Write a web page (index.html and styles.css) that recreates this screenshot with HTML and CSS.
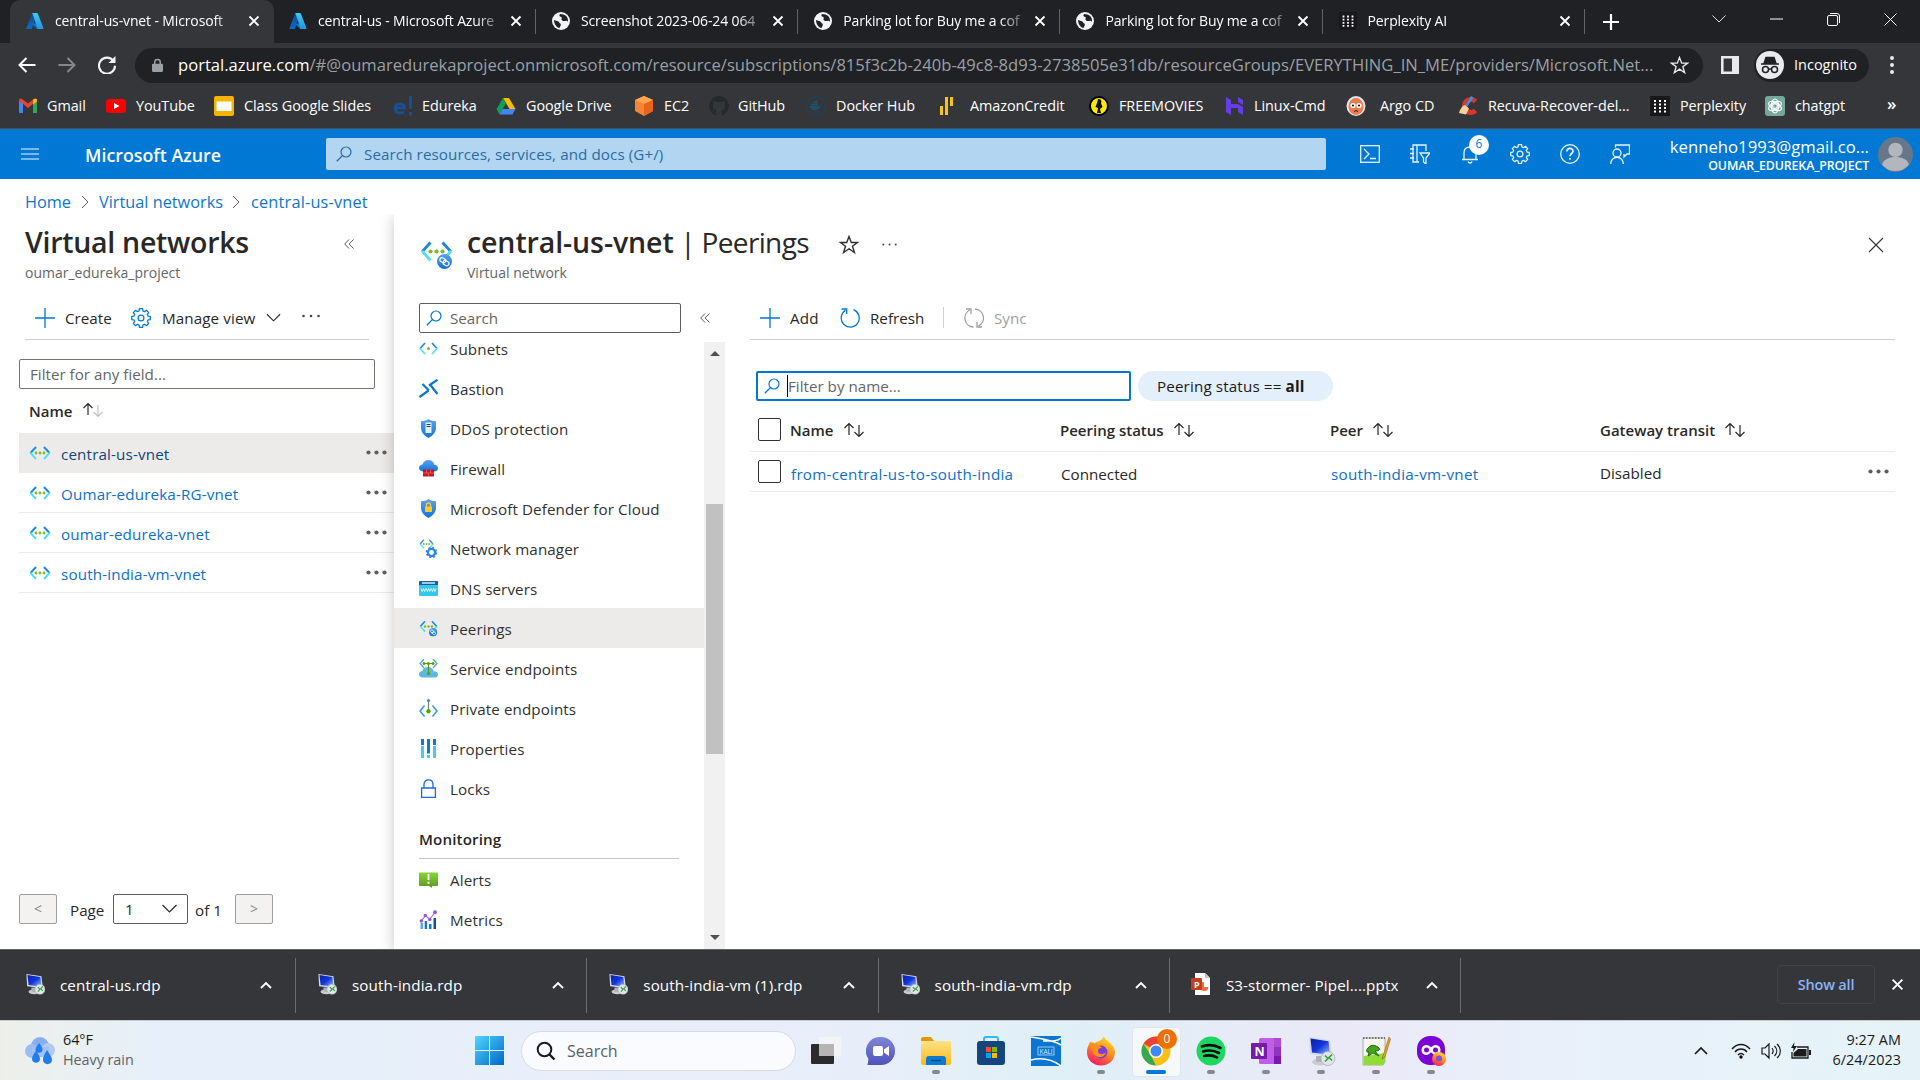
FILE: index.html
```html
<!DOCTYPE html>
<html lang="en">
<head>
<meta charset="utf-8">
<title>central-us-vnet - Microsoft Azure</title>
<link rel="stylesheet" href="styles.css">
</head>
<body>
<svg class="defs" aria-hidden="true">
  <defs>
    <linearGradient id="az1" x1="0" y1="0" x2="0" y2="1"><stop offset="0" stop-color="#114a8b"/><stop offset="1" stop-color="#0a6bc4"/></linearGradient>
    <linearGradient id="az2" x1="0" y1="0" x2="0" y2="1"><stop offset="0" stop-color="#3ccbf4"/><stop offset="1" stop-color="#2892df"/></linearGradient>
    <linearGradient id="shieldG" x1="0" y1="0" x2="0" y2="1"><stop offset="0" stop-color="#5ea0ef"/><stop offset="1" stop-color="#0f74d6"/></linearGradient>
    <linearGradient id="winG" x1="0" y1="0" x2="1" y2="1"><stop offset="0" stop-color="#4fd6ff"/><stop offset="1" stop-color="#0067c5"/></linearGradient>
    <linearGradient id="screenG" x1="0" y1="0" x2="1" y2="1"><stop offset="0" stop-color="#0a1fae"/><stop offset=".5" stop-color="#1236d8"/><stop offset="1" stop-color="#9cc0ff"/></linearGradient>
    <linearGradient id="foldG" x1="0" y1="0" x2="0" y2="1"><stop offset="0" stop-color="#ffe28a"/><stop offset="1" stop-color="#fbb917"/></linearGradient>
    <linearGradient id="foxG" x1=".8" y1="0" x2=".3" y2="1"><stop offset="0" stop-color="#ffe226"/><stop offset=".5" stop-color="#ff8a1d"/><stop offset="1" stop-color="#f5156c"/></linearGradient>
    <linearGradient id="chatG" x1="0" y1="0" x2="0" y2="1"><stop offset="0" stop-color="#8185d6"/><stop offset="1" stop-color="#4f52bd"/></linearGradient>
    <linearGradient id="alertG" x1="0" y1="0" x2="0" y2="1"><stop offset="0" stop-color="#86d633"/><stop offset="1" stop-color="#5e9624"/></linearGradient>
    <symbol id="azure" viewBox="0 0 18 18"><path d="M6.200 1h5L6 16.400a.9.9 0 0 1-.8.600H1.300a.8.800 0 0 1-.8-1.100z" fill="url(#az1)"/><path d="M13 11.500H5.500l4.800 4.600.9.900h4.200z" fill="#0078d4"/><path d="M11.800 1.600a.9.9 0 0 0-.8-.6H6.300l5 15c.1.500-.1 1-.6 1h5.900a.8.8 0 0 0 .8-1.100z" fill="url(#az2)"/></symbol>
    <symbol id="globe" viewBox="0 0 18 18"><circle cx="9" cy="9" r="9" fill="#f1f3f4"/><path d="M2 8c2 1 4 .6 5 2.300s2 1 1.800 2.600-1.300 2.200-1.300 3.200C4.500 15.500 2 12 2 8zM8 2c-1 1.500-.7 2.600.8 2.800 1.500.3 1 1.600.6 2.400s2 2.300 4.200 1.700c1.300-.3 2 .4 2.400 1C16.600 5 13.200 2 8 2z" fill="#202124"/></symbol>
    <symbol id="x" viewBox="0 0 12 12"><path d="M1.500 1.500l9 9m0-9l-9 9" fill="none" stroke="currentColor" stroke-width="1.800"/></symbol>
    <symbol id="bigx" viewBox="0 0 16 16"><path d="M1 1l14 14m0-14L1 15" fill="none" stroke="currentColor" stroke-width="1.100"/></symbol>
    <symbol id="dots9" viewBox="0 0 20 20"><rect width="20" height="20" fill="#18181b"/><path d="M4 5h12M4 8.500h12M4 12h12M4 15.500h12" stroke="#fff" stroke-width="2" stroke-dasharray="2 3"/></symbol>
    <symbol id="mag" viewBox="0 0 16 16"><circle cx="10" cy="6" r="5" fill="none" stroke="currentColor" stroke-width="1.200"/><path d="M6.400 9.600L.8 15.200" stroke="currentColor" stroke-width="1.300"/></symbol>
    <symbol id="gear" viewBox="0 0 20 20"><path d="M8.110 2.950L8.370.740h3.260l.26 2.210 1.760.73 1.740-1.380 2.310 2.310-1.380 1.740.73 1.760 2.210.26v3.260l-2.210.26-.73 1.760 1.380 1.740-2.310 2.310-1.740-1.380-1.760.73-.26 2.210H8.370l-.26-2.210-1.760-.73-1.740 1.380L2.300 15.390l1.380-1.740-.73-1.760-2.210-.26V8.370l2.210-.26.73-1.760L2.300 4.610 4.610 2.300l1.740 1.380z" fill="none" stroke="currentColor" stroke-width="1.250" stroke-linejoin="round"/><circle cx="10" cy="10" r="2.900" fill="none" stroke="currentColor" stroke-width="1.250"/></symbol>
    <symbol id="plus" viewBox="0 0 20 20"><path d="M10 0v20M0 10h20" stroke="#0078d4" stroke-width="1.300"/></symbol>
    <symbol id="chev" viewBox="0 0 16 10"><path d="M1 1l7 7 7-7" fill="none" stroke="currentColor" stroke-width="1.200"/></symbol>
    <symbol id="up" viewBox="0 0 12 8"><path d="M1 7l5-5 5 5" fill="none" stroke="currentColor" stroke-width="1.900"/></symbol>
    <symbol id="crumb" viewBox="0 0 8 14"><path d="M1 1l6 6-6 6" fill="none" stroke="#605e5c" stroke-width="1"/></symbol>
    <symbol id="collapse" viewBox="0 0 10 10"><path d="M5 .5L.7 5 5 9.500M9.500.5L5.200 5l4.300 4.500" fill="none" stroke="#605e5c" stroke-width="1"/></symbol>
    <symbol id="ell" viewBox="0 0 22 5"><circle cx="2.500" cy="2.500" r="2.100"/><circle cx="10.500" cy="2.500" r="2.100"/><circle cx="18.500" cy="2.500" r="2.100"/></symbol>
    <symbol id="sort" viewBox="0 0 22 16"><path d="M6 13V1.500M1.500 6L6 1.500 10.500 6" fill="none" stroke="currentColor" stroke-width="1.200"/><path d="M16 3v11.500M11.500 10l4.500 4.500 4.500-4.500" fill="none" stroke="var(--dn, currentColor)" stroke-width="1.200"/></symbol>
    <symbol id="vnet" viewBox="0 0 22 14"><path d="M7 1L1.500 7" stroke="#1b87da" stroke-width="1.900" fill="none"/><path d="M15 1l5.500 6" stroke="#1b87da" stroke-width="1.900" fill="none"/><path d="M1.300 6.700L7 13M20.700 6.700L15 13" stroke="#50dff5" stroke-width="1.900" fill="none"/><circle cx="7" cy="7" r="1.400" fill="#76bc2d"/><circle cx="11" cy="7" r="1.400" fill="#76bc2d"/><circle cx="15" cy="7" r="1.400" fill="#76bc2d"/></symbol>
    <symbol id="subnet" viewBox="0 0 19 19"><path d="M6 4L1 9.500M13 4l5 5.500" stroke="#1b87da" stroke-width="1.600"/><path d="M.8 9.200L6 15M18.200 9.200L13 15" stroke="#50dff5" stroke-width="1.600"/><circle cx="9.500" cy="9.500" r="1.500" fill="#76bc2d"/></symbol>
    <symbol id="link" viewBox="0 0 16 16"><circle cx="8" cy="8" r="8" fill="url(#shieldG)"/><g fill="none" stroke="#fff" stroke-width="1.300" transform="rotate(30 8 8)"><rect x="2.500" y="5.500" width="6.500" height="4.500" rx="2.200"/><rect x="7" y="6.500" width="6.500" height="4.500" rx="2.200"/></g></symbol>
    <symbol id="peer" viewBox="0 0 33 28"><use href="#vnet" width="33" height="21"/><use href="#link" x="17" y="13" width="15" height="15"/></symbol>
    <symbol id="bastion" viewBox="0 0 19 19"><path d="M18.500.8L10 6.500M.5 18L9.500 11.500M3.500 5l6.500 6.600M11 5.500l7.500 9.500" stroke="#0a76cf" stroke-width="2.200" fill="none"/></symbol>
    <symbol id="shield" viewBox="0 0 19 19"><path d="M9.500 0C7 2 4.500 2 2 2.200V9c0 5 4.500 8.500 7.500 10 3-1.500 7.500-5 7.500-10V2.200C14.500 2 12 2 9.500 0z" fill="url(#shieldG)"/></symbol>
    <symbol id="fire" viewBox="0 0 19 19"><path d="M4.500 12.500C2 12.500 0 11 0 8.900c0-2 1.500-3.300 3.500-3.500C4.300 2.600 6.500 1 9.500 1s5.200 2 5.800 4.700c2.200.2 3.700 1.600 3.700 3.500 0 2-1.700 3.300-4 3.300z" fill="url(#shieldG)"/><path d="M4 10.500h11v7H4z" fill="#c4161c"/><path d="M4 14h11M7.500 10.500V14M11.500 10.500V14M9.500 14v3.500" stroke="#f08080" stroke-width=".6"/></symbol>
    <symbol id="nm" viewBox="0 0 19 19"><use href="#vnet" x="0" y="0" width="15" height="10"/><circle cx="12.500" cy="13.500" r="3.600" fill="none" stroke="#2f86dc" stroke-width="2.300"/><circle cx="12.500" cy="13.500" r="5" fill="none" stroke="#2f86dc" stroke-width="1.500" stroke-dasharray="2 1.930"/></symbol>
    <symbol id="dns" viewBox="0 0 19 19"><rect x="0" y="2" width="19" height="15" rx="1" fill="#34c8ea"/><path d="M0 6V3a1 1 0 0 1 1-1h17a1 1 0 0 1 1 1v3z" fill="#1160a8"/><path d="M3 4h13" stroke="#fff" stroke-width="1.300"/><path d="M2 9.500l1.200 3 1.200-3 1.200 3 1.200-3M7.200 9.500l1.200 3 1.200-3 1.200 3 1.200-3M12.300 9.500l1.200 3 1.200-3 1.200 3 1.200-3" stroke="#fff" stroke-width=".8" fill="none"/></symbol>
    <symbol id="sep" viewBox="0 0 19 19"><path d="M3.500 18.500C1.500 18.500 0 17 0 15.200s1.500-3 3.200-3.100C4 9.500 6 8 9 8s5 1.700 5.600 4.300c2.500 0 4.400 1 4.400 3.100s-1.500 3.100-3.500 3.100z" fill="#5ab9dd"/><path d="M5 0L1 4.500 5 9M14 0l4 4.500L14 9" stroke="#4aa9d4" stroke-width="1.300" fill="none"/><path d="M4.500 4.500h10M9.500 4.500V15" stroke="#5c9d10" stroke-width="1"/><g fill="#57a300"><circle cx="5" cy="4.500" r="1.500"/><circle cx="9.500" cy="4.500" r="1.500"/><circle cx="14" cy="4.500" r="1.500"/><circle cx="9.500" cy="14.500" r="1.600"/></g></symbol>
    <symbol id="pep" viewBox="0 0 19 19"><path d="M5.500 6.500L1 12l4.500 5.500M13.500 6.500L18 12l-4.500 5.500" stroke="#3d9fd0" stroke-width="1.600" fill="none"/><path d="M9.500 2v10" stroke="#7a7f85" stroke-width="1.200"/><circle cx="9.500" cy="1.600" r="1.600" fill="#3595c9"/><circle cx="9.500" cy="12.300" r="2.200" fill="#57a300"/></symbol>
    <symbol id="props" viewBox="0 0 19 19"><path d="M2 0h3v6H2zM8 0h3v14.500H8zM14 0h3v6h-3z" fill="#1178d0"/><path d="M2 7h3v12H2zM8 16h3v3H8zM14 7h3v12h-3z" fill="#3fcfec"/></symbol>
    <symbol id="locks" viewBox="0 0 19 19"><path d="M2.600 9h13.800v9.300H2.600zM5 9V5.500C5 2.500 7 .8 9.500.8S14 2.500 14 5.500V9" fill="none" stroke="#1a6be0" stroke-width="1.300"/></symbol>
    <symbol id="alerts" viewBox="0 0 19 19"><path d="M.8 2.500h17.400a.8.800 0 0 1 .8.800v11.900a.8.800 0 0 1-.8.800H13v2L10 16H.8a.8.800 0 0 1-.8-.8V3.300a.8.800 0 0 1 .8-.8z" fill="url(#alertG)"/><path d="M9.500 4v6M9.500 11.700v2" stroke="#fff" stroke-width="1.900"/></symbol>
    <symbol id="metrics" viewBox="0 0 19 19"><path d="M1.500 13H4v6H1.500z" fill="#5aa4f0"/><path d="M5.700 11H8v8H5.700zM10 14h2.500v5H10z" fill="#1178d0"/><path d="M14.500 8H17v11h-2.500z" fill="#0a559c"/><path d="M2.300 11l4-5.200L10.800 9 16 2.500" stroke="#a66ee4" stroke-width="1.200" fill="none"/><g fill="#9455dd"><circle cx="2.300" cy="11" r="1.700"/><circle cx="6.300" cy="5.500" r="1.700"/><circle cx="10.800" cy="9.500" r="1.700"/><circle cx="16" cy="2.200" r="1.900"/></g></symbol>
    <symbol id="refresh" viewBox="0 0 20 20"><path d="M13.500 1.700A9 9 0 1 1 5.500 2.400M1.500 1h5.200v5" fill="none" stroke="currentColor" stroke-width="1.300"/></symbol>
    <symbol id="sync" viewBox="0 0 20 20"><path d="M9.500 19A9 9 0 0 1 5.800 2M2 1h5v5M11 1a9 9 0 0 1 3.500 17M18 19h-5v-5" fill="none" stroke="currentColor" stroke-width="1.300"/></symbol>
    <symbol id="star" viewBox="0 0 20 20"><path d="M10 1.500l2.300 6h6.200l-5 3.800 1.900 6.300L10 13.800l-5.400 3.800 1.900-6.300-5-3.800h6.200z" fill="none" stroke="currentColor" stroke-width="1.400"/></symbol>
    <symbol id="rdp" viewBox="0 0 28 30"><ellipse cx="13" cy="26" rx="8" ry="3.500" fill="#c9ccd2"/><path d="M9 20h8v6H9z" fill="#aeb3bb"/><path d="M2 1l21 3 2 17L3 18z" fill="#d4dae5"/><path d="M3.500 2.500l18 2.800 1.500 13.500L5 16.500z" fill="url(#screenG)"/><circle cx="21" cy="22.500" r="7" fill="#e2e4e6" stroke="#a7abb0" stroke-width=".7"/><path d="M18 19.500l3 3-3 3M25 18.500l-3 3 3 3" stroke="#2fa34a" stroke-width="1.600" fill="none"/></symbol>
  </defs>
</svg>

<header class="tabs">
  <div class="tab active"><svg class="fav"><use href="#azure"/></svg><span class="ttl">central-us-vnet - Microsoft</span><svg class="tx"><use href="#x"/></svg></div>
  <div class="tab"><svg class="fav"><use href="#azure"/></svg><span class="ttl">central-us - Microsoft Azure</span><svg class="tx"><use href="#x"/></svg></div>
  <div class="tab line"><svg class="fav"><use href="#globe"/></svg><span class="ttl">Screenshot 2023-06-24 064</span><svg class="tx"><use href="#x"/></svg></div>
  <div class="tab line"><svg class="fav"><use href="#globe"/></svg><span class="ttl">Parking lot for Buy me a cof</span><svg class="tx"><use href="#x"/></svg></div>
  <div class="tab line"><svg class="fav"><use href="#globe"/></svg><span class="ttl">Parking lot for Buy me a cof</span><svg class="tx"><use href="#x"/></svg></div>
  <div class="tab line"><svg class="fav"><use href="#dots9"/></svg><span class="ttl">Perplexity AI</span><svg class="tx"><use href="#x"/></svg></div>
  <div class="tab-new"><svg width="16" height="16" viewBox="0 0 16 16"><path d="M8 0v16M0 8h16" stroke="#fff" stroke-width="2.200"/></svg></div>
  <div class="winctl">
    <svg width="14" height="8" viewBox="0 0 14 8"><path d="M.5.500L7 7 13.500.5" fill="none" stroke="#ddd"/></svg>
    <svg width="13" height="2"><path d="M0 1h13" stroke="#fff"/></svg>
    <svg width="13" height="13" viewBox="0 0 13 13"><rect x=".6" y="2.500" width="10" height="10" rx="1.500" fill="none" stroke="#fff"/><path d="M3 .5h7a2.500 2.500 0 0 1 2.500 2.500v7" fill="none" stroke="#fff"/></svg>
    <svg width="13" height="13" viewBox="0 0 13 13"><path d="M.5.500l12 12m0-12l-12 12" stroke="#fff"/></svg>
  </div>
</header>

<div class="toolbar">
  <div class="nav">
    <svg width="18" height="16" viewBox="0 0 18 16"><path d="M17.500 8H2M8.500 1L1.500 8l7 7" fill="none" stroke="#fff" stroke-width="2"/></svg>
    <svg width="18" height="16" viewBox="0 0 18 16"><path d="M.5 8H16M9.500 1l7 7-7 7" fill="none" stroke="#85878b" stroke-width="2"/></svg>
    <svg width="18" height="18" viewBox="0 0 18 18"><path d="M15.500 5A8 8 0 1 0 17 9.800" fill="none" stroke="#f1f3f4" stroke-width="2.100"/><path d="M17.500 0v7h-7z" fill="#f1f3f4"/></svg>
  </div>
  <div class="omni">
    <svg class="lock" viewBox="0 0 12 15"><path d="M3 6V4a3 3 0 0 1 6 0v2" fill="none" stroke="#9aa0a6" stroke-width="1.600"/><rect y="5.500" width="12" height="9" rx="1.200" fill="#9aa0a6"/></svg>
    <span class="url"><b>portal.azure.com</b>/#@oumaredurekaproject.onmicrosoft.com/resource/subscriptions/815f3c2b-240b-49c8-8d93-2738505e31db/resourceGroups/EVERYTHING_IN_ME/providers/Microsoft.Net...</span>
    <svg class="ostar"><use href="#star"/></svg>
  </div>
  <svg class="side" viewBox="0 0 18 18"><path d="M1.300 1.300h15.400v15.400H1.300z" fill="none" stroke="#e8eaed" stroke-width="2.600"/><path d="M11 1h6v16h-6z" fill="#e8eaed"/></svg>
  <div class="incog"><svg width="28" height="28" viewBox="0 0 28 28"><circle cx="14" cy="14" r="14" fill="#e8eaed"/><path d="M5 13h18M10 6.500h8l2 6H8z" fill="#202124" stroke="#202124" stroke-width="1.500"/><g fill="none" stroke="#202124" stroke-width="1.500"><circle cx="9.500" cy="18.500" r="3"/><circle cx="18.500" cy="18.500" r="3"/><path d="M12.500 18h3"/></g></svg><span>Incognito</span></div>
  <svg class="kebab" viewBox="0 0 4 18"><g fill="#e8eaed"><circle cx="2" cy="2" r="2"/><circle cx="2" cy="9" r="2"/><circle cx="2" cy="16" r="2"/></g></svg>
</div>

<nav class="bookmarks">
  <a><svg viewBox="0 0 20 20"><path d="M1 17V4l4 3.500V17z" fill="#4285f4"/><path d="M15 7.500L19 4v13h-4z" fill="#34a853"/><path d="M1 4.500C1 2.500 3 2 4.500 3.200L10 7.500l5.500-4.300C17 2 19 2.500 19 4.500L10 12z" fill="#ea4335"/><path d="M15 3.600C17 2 19 2.500 19 4.500v1l-4 3z" fill="#fbbc04"/></svg>Gmail</a>
  <a><svg viewBox="0 0 20 20"><rect y="3" width="20" height="14" rx="3.500" fill="#f00"/><path d="M8 7l5.500 3L8 13z" fill="#fff"/></svg>YouTube</a>
  <a><svg viewBox="0 0 20 20"><rect width="20" height="20" rx="2" fill="#f5b400"/><rect x="2.500" y="5.500" width="15" height="9.500" fill="#fff"/></svg>Class Google Slides</a>
  <a><svg viewBox="0 0 20 20"><path d="M2 12h9.500c.5-5-9-6-9.500 0 0 6 6 5.500 9 4M17.500 0v13M17.500 16v3.500" fill="none" stroke="#1a4f93" stroke-width="2.800"/></svg>Edureka</a>
  <a><svg viewBox="0 0 20 20"><path d="M7 2h6l6.500 11h-6z" fill="#fbbc04"/><path d="M7 2l3 5.500L3.500 18.500.5 13z" fill="#0f9d58"/><path d="M6.500 13h13l-3 5.500h-13z" fill="#4285f4"/></svg>Google Drive</a>
  <a><svg viewBox="0 0 20 20"><path d="M10 0l9 4v11l-9 5-9-5V4z" fill="#f58536"/><path d="M10 0l9 4-9 4-9-4z" fill="#ffa64d"/><path d="M10 8l9-4v11l-9 5z" fill="#e8641b"/></svg>EC2</a>
  <a><svg viewBox="0 0 20 20"><path d="M10 0a10 10 0 0 0-3 19.500v-3C4.500 17 4 15 3 14.500c2-.5 2 2 4 1.500l.5-1.500C4 14 3.500 11 4 8.500l.5-1V5c1 0 2 .5 2.500 1h6c.5-.5 1.500-1 2.500-1v2.500c1.500 4 0 6.500-3.500 7 1 1 1 2 1 5A10 10 0 0 0 10 0z" fill="#24292e"/></svg>GitHub</a>
  <a><svg viewBox="0 0 20 20"><circle cx="10" cy="10" r="9.300" fill="none" stroke="#1e4258" stroke-width="1.200"/><path d="M3.500 10h10.500c1-.5 1-2 2-2-.5 1.500-1 2-2 2.500-1 4.500-8.500 6-10.500-.5zM5 7.500h7v2H5zM8 5h3v2H8z" fill="#1f506e"/></svg>Docker Hub</a>
  <a><svg viewBox="0 0 20 20"><path d="M3 10h3v9H3zM8 1h3v18H8zM13 1h3v9h-3z" fill="#f5c518"/></svg>AmazonCredit</a>
  <a><svg viewBox="0 0 20 20"><circle cx="10" cy="10" r="9" fill="#ffe900" stroke="#000" stroke-width="2"/><path d="M9 3c3 0 4 2 3 4l1.500 4-2.500 2 1 4H8l1-5-2.500-1L8 7z" fill="#111"/></svg>FREEMOVIES</a>
  <a><svg viewBox="0 0 20 20"><path d="M2 1l5 3v4h7l5 3v8l-5-3v-4H7v7l-5-3zM14 1l5 3v5l-5-3z" fill="#673de6"/></svg>Linux-Cmd</a>
  <a><svg viewBox="0 0 20 20"><ellipse cx="10" cy="10" rx="9.500" ry="10" fill="#dfe6f0"/><ellipse cx="10" cy="10.500" rx="7.500" ry="8.500" fill="#ef7b4d"/><circle cx="7" cy="9.500" r="2.600" fill="#fff"/><circle cx="13" cy="9.500" r="2.600" fill="#fff"/><circle cx="7" cy="9.500" r="1"/><circle cx="13" cy="9.500" r="1"/><path d="M8 15.500q2-2 4 0" fill="none" stroke="#222"/></svg>Argo CD</a>
  <a><svg viewBox="0 0 20 20"><path d="M17.500 5.500A6.500 6.500 0 1 0 17.500 14.500" fill="none" stroke="#d8382a" stroke-width="5"/><path d="M13 0l2.500 1.500L9 11l-2-1z" fill="#3e8ede"/><path d="M7 9l4 3.500-3 6-7-1.500c1-4 3-7 6-8z" fill="#f2d39b"/></svg>Recuva-Recover-del...</a>
  <a><svg viewBox="0 0 20 20"><use href="#dots9"/></svg>Perplexity</a>
  <a><svg viewBox="0 0 20 20"><rect width="20" height="20" rx="3" fill="#74aa9c"/><g fill="none" stroke="#fff" stroke-width="1.100"><circle cx="10" cy="10" r="2.400"/><ellipse cx="10" cy="10" rx="3.700" ry="7"/><ellipse cx="10" cy="10" rx="3.700" ry="7" transform="rotate(60 10 10)"/><ellipse cx="10" cy="10" rx="3.700" ry="7" transform="rotate(120 10 10)"/></g></svg>chatgpt</a>
  <b class="more">»</b>
</nav>

<div class="azbar">
  <svg class="burger" viewBox="0 0 18 12"><path d="M0 1h18M0 6h18M0 11h18" stroke="#9fcbef" stroke-width="1.400"/></svg>
  <span class="brand">Microsoft Azure</span>
  <div class="gsearch"><svg width="16" height="16"><use href="#mag"/></svg>Search resources, services, and docs (G+/)</div>
  <div class="azicons">
    <svg viewBox="0 0 20 20"><rect x=".7" y="1.700" width="18.600" height="16.600" fill="none" stroke="currentColor" stroke-width="1.300"/><path d="M4 5l5 5-5 5M10 14.500h6" fill="none" stroke="currentColor" stroke-width="1.300"/></svg>
    <svg viewBox="0 0 20 20"><path d="M16 7V1H3v17h6M7 1v17M0 5h4M0 9.500h4M0 14h4M10 9h10l-4 5v6l-2.500-2v-4z" fill="none" stroke="currentColor" stroke-width="1.300"/></svg>
    <span class="bell"><svg viewBox="0 0 20 20"><path d="M2 15.500h16M4 15.500V9c0-4 2.500-6 6-6s6 2 6 6v6.500M8 17.500c.5 2 3.500 2 4 0" fill="none" stroke="currentColor" stroke-width="1.300"/></svg><i>6</i></span>
    <svg><use href="#gear"/></svg>
    <svg viewBox="0 0 20 20"><circle cx="10" cy="10" r="9.300" fill="none" stroke="currentColor" stroke-width="1.300"/><path d="M7 7.500c0-4 6-4 6-.3 0 2.300-3 2.300-3 5M10 14v1.800" fill="none" stroke="currentColor" stroke-width="1.700"/></svg>
    <svg viewBox="0 0 20 20"><circle cx="7" cy="9" r="4" fill="none" stroke="currentColor" stroke-width="1.300"/><path d="M.7 20c0-9 12.600-9 12.600 0M5.500 3.500V1h14v9h-2.500l-3 3v-3" fill="none" stroke="currentColor" stroke-width="1.300"/></svg>
  </div>
  <div class="acct"><span>kenneho1993@gmail.co...</span><b>OUMAR_EDUREKA_PROJECT</b></div>
  <svg class="avatar" viewBox="0 0 34 34"><circle cx="17" cy="17" r="17" fill="#68768a"/><circle cx="17" cy="12.500" r="7" fill="#b3b7bd"/><path d="M4 27c2-10 24-10 26 0a17 17 0 0 1-26 0z" fill="#b3b7bd"/></svg>
</div>

<div class="crumbs"><a>Home</a><svg><use href="#crumb"/></svg><a>Virtual networks</a><svg><use href="#crumb"/></svg><a>central-us-vnet</a></div>

<main class="blades">
  <section class="list">
    <div class="head"><h1>Virtual networks</h1><svg class="coll"><use href="#collapse"/></svg></div>
    <p class="sub">oumar_edureka_project</p>
    <div class="cmds"><svg class="ic"><use href="#plus"/></svg><span class="c1">Create</span><svg class="ic blue"><use href="#gear"/></svg><span class="c2">Manage view</span><svg class="cv"><use href="#chev"/></svg><svg class="thin" viewBox="0 0 18 4"><circle cx="1.500" cy="2" r="1.300"/><circle cx="9" cy="2" r="1.300"/><circle cx="16.500" cy="2" r="1.300"/></svg></div>
    <div class="anyf">Filter for any field...</div>
    <div class="colname">Name<svg class="sort half"><use href="#sort"/></svg></div>
    <div class="vrow sel"><svg class="vi"><use href="#vnet"/></svg><a>central-us-vnet</a><svg class="el"><use href="#ell"/></svg></div>
    <div class="vrow"><svg class="vi"><use href="#vnet"/></svg><a>Oumar-edureka-RG-vnet</a><svg class="el"><use href="#ell"/></svg></div>
    <div class="vrow"><svg class="vi"><use href="#vnet"/></svg><a>oumar-edureka-vnet</a><svg class="el"><use href="#ell"/></svg></div>
    <div class="vrow"><svg class="vi"><use href="#vnet"/></svg><a>south-india-vm-vnet</a><svg class="el"><use href="#ell"/></svg></div>
    <div class="pager"><span class="pb">&lt;</span><span class="pg">Page</span><span class="psel">1<svg><use href="#chev"/></svg></span><span class="of">of 1</span><span class="pb">&gt;</span></div>
  </section>

  <section class="detail">
    <div class="dhead">
      <svg class="big"><use href="#peer"/></svg>
      <div><h1>central-us-vnet<span> | Peerings</span></h1><p class="sub">Virtual network</p></div>
      <svg class="fstar"><use href="#star"/></svg>
      <svg class="fdots" viewBox="0 0 15 3"><circle cx="1.300" cy="1.500" r="1"/><circle cx="7.500" cy="1.500" r="1"/><circle cx="13.700" cy="1.500" r="1"/></svg>
      <svg class="close"><use href="#bigx"/></svg>
    </div>
    <div class="dbody">
      <div class="menu">
        <div class="msearch"><div class="mbox"><svg width="16" height="16"><use href="#mag"/></svg>Search</div><svg class="coll"><use href="#collapse"/></svg></div>
        <div class="mscroll">
          <div class="items">
            <a><svg><use href="#subnet"/></svg>Subnets</a>
            <a><svg><use href="#bastion"/></svg>Bastion</a>
            <a><svg viewBox="0 0 19 19"><use href="#shield"/><rect x="6.500" y="3.500" width="6" height="10.500" rx=".6" fill="#e8eef5"/><path d="M7.500 5.500h4M7.500 7.500h4" stroke="#0c4a8a" stroke-width="1.200"/></svg>DDoS protection</a>
            <a><svg><use href="#fire"/></svg>Firewall</a>
            <a><svg viewBox="0 0 19 19"><use href="#shield"/><rect x="6" y="7.500" width="7" height="5.500" rx=".6" fill="#ffca28"/><path d="M7.500 8V6a2 2 0 0 1 4 0v2" fill="none" stroke="#ffca28" stroke-width="1.300"/></svg>Microsoft Defender for Cloud</a>
            <a><svg><use href="#nm"/></svg>Network manager</a>
            <a><svg><use href="#dns"/></svg>DNS servers</a>
            <a class="on"><svg><use href="#peer"/></svg>Peerings</a>
            <a><svg><use href="#sep"/></svg>Service endpoints</a>
            <a><svg><use href="#pep"/></svg>Private endpoints</a>
            <a><svg><use href="#props"/></svg>Properties</a>
            <a><svg><use href="#locks"/></svg>Locks</a>
            <h2>Monitoring</h2>
            <a><svg><use href="#alerts"/></svg>Alerts</a>
            <a><svg><use href="#metrics"/></svg>Metrics</a>
          </div>
          <div class="bar"><svg viewBox="0 0 12 6"><path d="M6 0l6 6H0z" fill="#505050"/></svg><div class="thumb"></div><svg viewBox="0 0 12 6"><path d="M0 0h12L6 6z" fill="#505050"/></svg></div>
        </div>
      </div>
      <div class="content">
        <div class="cmds"><svg class="ic"><use href="#plus"/></svg><span class="a1">Add</span><svg class="ic blue"><use href="#refresh"/></svg><span class="a2">Refresh</span><i class="vsep"></i><svg class="ic gray"><use href="#sync"/></svg><span class="gray">Sync</span></div>
        <div class="filters"><div class="fbox"><svg width="16" height="16"><use href="#mag"/></svg><i></i>Filter by name...</div><div class="pill">Peering status == <b>all</b></div></div>
        <div class="trow th"><i class="cb"></i><span>Name<svg class="sort"><use href="#sort"/></svg></span><span>Peering status<svg class="sort"><use href="#sort"/></svg></span><span>Peer<svg class="sort"><use href="#sort"/></svg></span><span>Gateway transit<svg class="sort"><use href="#sort"/></svg></span></div>
        <div class="trow td"><i class="cb"></i><a>from-central-us-to-south-india</a><span>Connected</span><a>south-india-vm-vnet</a><span class="dis">Disabled</span><svg class="el"><use href="#ell"/></svg></div>
      </div>
    </div>
  </section>
</main>

<div class="downloads">
  <div class="dl"><svg class="di"><use href="#rdp"/></svg><span>central-us.rdp</span><svg class="du"><use href="#up"/></svg></div>
  <div class="dl"><svg class="di"><use href="#rdp"/></svg><span>south-india.rdp</span><svg class="du"><use href="#up"/></svg></div>
  <div class="dl"><svg class="di"><use href="#rdp"/></svg><span>south-india-vm (1).rdp</span><svg class="du"><use href="#up"/></svg></div>
  <div class="dl"><svg class="di"><use href="#rdp"/></svg><span>south-india-vm.rdp</span><svg class="du"><use href="#up"/></svg></div>
  <div class="dl"><svg class="di" viewBox="0 0 20 22"><path d="M4 0h10l5 5v17H4z" fill="#fff"/><path d="M14 0l5 5h-5z" fill="#c9c9c9"/><path d="M13 9a4.500 4.500 0 1 0 4.500 5H13z" fill="#ed6c47"/><rect y="5" width="11" height="12" rx="1" fill="#c43e1c"/><text x="3" y="14.500" font-size="9" font-weight="700" fill="#fff">P</text></svg><span>S3-stormer- Pipel....pptx</span><svg class="du"><use href="#up"/></svg></div>
  <span class="showall">Show all</span>
  <svg class="dx"><use href="#x"/></svg>
</div>

<footer class="taskbar">
  <div class="weather"><svg width="30" height="28" viewBox="0 0 30 28"><circle cx="15" cy="9" r="9" fill="#86aef0"/><circle cx="7" cy="14" r="7" fill="#9dbcf2"/><circle cx="23" cy="13" r="7" fill="#b5c9ef"/><path d="M7 10h17v10H7z" fill="#a4c0f2"/><path d="M14 6c2 3 3.500 4.500 3.500 6.300a3.500 3.500 0 0 1-7 0C10.500 10.500 12 9 14 6zM11 13.500c2.500 4 4 6 4 8.500 0 5-8 5-8 0 0-2.500 1.500-4.500 4-8.500zM22 13c2.500 4.500 5 6.500 5 10 0 5.500-9 5.500-9 0 0-3.500 1.500-5.500 4-10z" fill="#1f7df0"/></svg><p>64°F<br><span>Heavy rain</span></p></div>
  <svg class="win" viewBox="0 0 29 29"><path d="M0 0h14v14H0zM15 0h14v14H15zM0 15h14v14H0zM15 15h14v14H15z" fill="url(#winG)"/></svg>
  <div class="tsearch"><svg width="20" height="20" viewBox="0 0 20 20"><circle cx="8.500" cy="8.500" r="6.800" fill="none" stroke="#1b1b1b" stroke-width="2"/><path d="M13.500 13.500l5 5" stroke="#1b1b1b" stroke-width="2.400"/></svg>Search</div>
  <div class="apps">
    <span><svg viewBox="0 0 30 30"><rect x="0" y="8" width="23" height="20" rx="1" fill="#2b2b2b"/><rect x="8" y="1" width="22" height="19" rx="1" fill="#f4f4f4" fill-opacity=".9"/><path d="M8 8h15v12H8z" fill="#b5b5b5"/></svg></span>
    <span><svg viewBox="0 0 30 30"><path d="M15 1a14 14 0 0 1 0 28H1.500l1-6A14 14 0 0 1 15 1z" fill="url(#chatG)"/><rect x="7" y="10" width="10" height="10" rx="2" fill="#fff"/><path d="M18 13.500l5-3.500v10l-5-3.500z" fill="#fff"/></svg></span>
    <span class="run"><svg viewBox="0 0 30 30"><path d="M0 3a2 2 0 0 1 2-2h8l3 4H0z" fill="#e09b00"/><path d="M0 5h28a2 2 0 0 1 2 2v20a2 2 0 0 1-2 2H2a2 2 0 0 1-2-2z" fill="url(#foldG)"/><path d="M5 29v-6a3 3 0 0 1 3-3h14a3 3 0 0 1 3 3v6z" fill="#0b7bd0"/><path d="M10 24.500h10" stroke="#084c80" stroke-width="1.500"/></svg></span>
    <span><svg viewBox="0 0 30 30"><path d="M8 5V2.500A2 2 0 0 1 10 1h10a2 2 0 0 1 2 1.500V5" fill="none" stroke="#35b8ee" stroke-width="2"/><rect x="1" y="5" width="28" height="24" rx="3" fill="#15457f"/><path d="M10 11h5v5h-5z" fill="#f25022"/><path d="M16 11h5v5h-5z" fill="#7fba00"/><path d="M10 17h5v5h-5z" fill="#00a4ef"/><path d="M16 17h5v5h-5z" fill="#ffb900"/></svg></span>
    <span><svg viewBox="0 0 30 30"><rect width="30" height="30" fill="#0b76d1"/><path d="M0 1c12 2 22 3 30 8M12 5c8 0 13 1 18-3M0 24c12-3 22 0 30 6" fill="none" stroke="#fff" stroke-width="1.500"/><rect x="7" y="11" width="16" height="8" fill="none" stroke="#b9dcff" stroke-width=".8"/><text x="8.500" y="17.500" font-size="6.500" fill="#d6ebff">KALI</text></svg></span>
    <span class="run"><svg viewBox="0 0 30 30"><path d="M4 6c2 0 3 1 5 1 2-2 5-1 7-4 1-1 1-2 2-2.500 1 4 10 7 11 15C29 24 23 29.500 15 29.500S1 24 1 16C1 11 3 9 4 6z" fill="url(#foxG)"/><circle cx="15" cy="16" r="6.500" fill="#7b3fd6"/><path d="M5 11c5-3 10-1 11 1-3 0-4 1-4 3 0 4 6 4 8 1-1 7-13 8-15-5z" fill="#ff8f1f"/></svg></span>
    <span class="cur"><svg viewBox="0 0 30 30"><circle cx="15" cy="15" r="14.500" fill="#fbc116"/><path d="M15 15L2.500 7.600A14.500 14.500 0 0 1 27.500 7.700H15z" fill="#ea4335"/><path d="M15 29.500A14.500 14.500 0 0 1 2.500 7.700l7 11z" fill="#34a853"/><path d="M14 29.500l7-11.500 1-8h6a14.500 14.500 0 0 1-14 19.500z" fill="#fbc116"/><circle cx="15" cy="15" r="7" fill="#fff"/><circle cx="15" cy="15" r="5.500" fill="#4285f4"/></svg><i>0</i></span>
    <span class="run"><svg viewBox="0 0 30 30"><circle cx="15" cy="15" r="14.500" fill="#1ed760"/><path d="M6 10.500c6-2 13-1.500 18.500 1.500M7 15.500c5-1.500 11-1 16 1.500M8 20c4-1 9-.7 13 1.300" fill="none" stroke="#0a0a0a" stroke-width="2.600" stroke-linecap="round"/></svg></span>
    <span class="run"><svg viewBox="0 0 30 30"><rect x="8" y="2" width="22" height="26" rx="1.500" fill="#c05ee8"/><path d="M23 2h7v9h-7z" fill="#ae4bd5"/><path d="M23 11h7v9h-7z" fill="#9332bf"/><path d="M23 20h7v8h-7z" fill="#7719aa"/><rect x="0" y="7" width="16" height="16" rx="1" fill="#7719aa"/><text x="3.500" y="19.500" font-size="12.500" font-weight="700" fill="#fff">N</text></svg></span>
    <span class="run"><svg><use href="#rdp"/></svg></span>
    <span class="run"><svg viewBox="0 0 30 30"><path d="M2 2h22v24l-2 3H2z" fill="#f5f6f0" stroke="#9aa19a" stroke-width=".8"/><path d="M2.500 20L24 17v9l-2 3H2.500z" fill="#8edc35"/><path d="M2 2h22" stroke="#555" stroke-width="1.500" stroke-dasharray="1.500 1.500"/><path d="M7 12c3-4 8-3 11 0 2 2-1 3-4 3l4 5-6-3-5 3 1-4c-3 1-3-2-1-4z" fill="#45a51c" stroke="#174d08" stroke-width=".8"/><path d="M28 1l-6 19-1 3 3-2 5.500-18z" fill="#f0a51e" stroke="#7a4a1a" stroke-width=".5"/></svg></span>
    <span class="run"><svg viewBox="0 0 30 30"><rect x="1" y="0" width="28" height="29" rx="13" fill="#7b03d3"/><path d="M10 9c3 0 4 2 5 2s2-2 5-2c6 0 6 10 0 10-3 0-4-2.500-5-2.500S13 19 10 19c-6 0-6-10 0-10z" fill="#fff"/><circle cx="10.500" cy="14" r="2.500" fill="#7b03d3"/><circle cx="19.500" cy="14" r="2.500" fill="#7b03d3"/><circle cx="23" cy="23" r="7" fill="url(#foxG)"/><circle cx="23" cy="22.500" r="3" fill="#8250df"/></svg></span>
  </div>
  <div class="tray">
    <svg width="14" height="10" viewBox="0 0 14 10"><path d="M1 8l6-6 6 6" fill="none" stroke="#1b1b1b" stroke-width="1.700"/></svg>
    <svg class="wifi" width="20" height="16" viewBox="0 0 20 16"><path d="M1 6c5-6 13-6 18 0M4 9c3-4 9-4 12 0M7 12c2-2 4-2 6 0" fill="none" stroke="#1b1b1b" stroke-width="1.400"/><circle cx="10" cy="14" r="1.700"/></svg>
    <svg class="spk" width="20" height="18" viewBox="0 0 20 18"><path d="M1 6h3l4-4v14l-4-4H1zM11 6c1.500 2 1.500 4 0 6M13.500 4c3 3 3 7 0 10M16 2c4.500 4 4.500 10 0 14" fill="none" stroke="#1b1b1b" stroke-width="1.200"/></svg>
    <svg class="bat" width="20" height="18" viewBox="0 0 20 18"><path d="M6 5h11v11H1v-6" fill="none" stroke="#1b1b1b" stroke-width="1.300"/><path d="M7 7h8.500v7.500H2.500V11zM18 8h2v5h-2zM3.500 0L0 6h2.500L2 10l4-6H3z" fill="#1b1b1b"/></svg>
    <p>9:27 AM<br>6/24/2023</p>
  </div>
</footer>
</body>
</html>
```

FILE: styles.css
```css
* { box-sizing: border-box; }
html, body { margin: 0; width: 1920px; height: 1080px; overflow: hidden; }
body { display: flex; flex-direction: column; background: #fff; color: #292827; font: 15.2px/20px "Open Sans", "Noto Sans", sans-serif; }
h1, h2, p { margin: 0; }
svg { flex: none; display: block; }
span, a { white-space: nowrap; }
i { font-style: normal; }
.defs { position: absolute; width: 0; height: 0; }

/* browser tabs */
.tabs { flex: none; display: flex; height: 43px; background: #202124; color: #fff; padding-left: 10px; font-size: 14px; letter-spacing: -.13px; }
.tab { position: relative; display: flex; align-items: center; width: 262.2px; height: 43px; padding: 0 14px 2px 16px; }
.tab.active { width: 264px; background: #35363a; border-radius: 10px 10px 0 0; }
.tab.active + .tab { width: 262px; padding-left: 15px; }
.tab + .tab::after { content: ""; position: absolute; right: 0; top: 9px; width: 1px; height: 25px; background: #5f6368; }
.fav { width: 18px; height: 18px; margin-right: 11px; }
.ttl { width: 189px; margin-right: 4px; -webkit-mask-image: linear-gradient(90deg, #000 84%, transparent 100%); mask-image: linear-gradient(90deg, #000 84%, transparent 100%); }
.tx { width: 12px; height: 12px; margin-top: 1px; }
.tab.active .ttl { width: 189px; margin-right: 4px; }
.tab-new { display: flex; align-items: center; width: 60px; padding-left: 18px; }
.winctl { display: flex; flex: 1; align-items: center; justify-content: flex-end; gap: 44px; padding: 0 23px 5px 0; }

/* address bar */
.toolbar { flex: none; display: flex; align-items: center; height: 45px; padding-bottom: 1px; background: #35363a; color: #fff; }
.nav { display: flex; align-items: center; gap: 22px; width: 135px; padding-left: 18px; }
.omni { display: flex; align-items: center; width: 1568px; height: 35px; padding: 0 14px 0 17px; border-radius: 18px; background: #202124; }
.lock { width: 11px; height: 15px; margin-right: 15px; }
.url { width: 1480px; margin-right: 12px; color: #9aa0a6; font-size: 16.6px; letter-spacing: 0; }
.url b { font-weight: 400; color: #fff; }
.ostar { width: 19px; height: 19px; color: #e8eaed; }
.side { width: 18px; height: 18px; margin-left: 18px; }
.incog { display: flex; align-items: center; gap: 10px; width: 115px; height: 33px; margin-left: 15px; padding-left: 2px; border-radius: 17px; background: #202124; font-size: 14.5px; }
.kebab { width: 4px; height: 18px; margin-left: 21px; }

/* bookmarks */
.bookmarks { flex: none; display: flex; align-items: center; height: 41px; padding: 0 0 4px 18px; background: #35363a; border-bottom: 1px solid #4b4c50; color: #fff; font-size: 14.4px; letter-spacing: -.06px; }
.bookmarks a { display: flex; align-items: center; gap: 10px; width: 88px; }
.bookmarks svg { width: 20px; height: 20px; }
.bookmarks a:nth-child(1) { gap: 9px; }
.bookmarks a:nth-child(2) { width: 108px; }
.bookmarks a:nth-child(3) { width: 179px; }
.bookmarks a:nth-child(4) { width: 103px; gap: 9px; }
.bookmarks a:nth-child(5) { width: 138px; }
.bookmarks a:nth-child(6) { width: 75px; }
.bookmarks a:nth-child(7) { width: 97px; gap: 9px; }
.bookmarks a:nth-child(8) { width: 131px; gap: 10px; }
.bookmarks a:nth-child(9) { width: 152px; gap: 13px; }
.bookmarks a:nth-child(10) { width: 135px; }
.bookmarks a:nth-child(11) { width: 122px; }
.bookmarks a:nth-child(12) { width: 112px; gap: 14px; }
.bookmarks a:nth-child(13) { width: 192px; }
.bookmarks a:nth-child(14) { width: 115px; }
.bookmarks a:nth-child(15) { width: 122px; }
.more { font-size: 17px; font-weight: 600; margin-top: -4px; }

/* portal header */
.azbar { flex: none; display: flex; align-items: center; height: 50px; padding-left: 21px; background: #0078d4; color: #fff; }
.burger { width: 18px; height: 12px; }
.brand { width: 241px; margin-left: 46px; padding-top: 1px; font-size: 17.8px; font-weight: 600; letter-spacing: .02px; }
.gsearch { display: flex; align-items: center; gap: 12px; width: 1000px; height: 32px; padding-left: 10px; border-radius: 2px; background: #b2d6f2; color: #2b6ba3; font-size: 15.2px; letter-spacing: .08px; }
.azicons { display: flex; gap: 30px; margin-left: 34px; color: #e6f2fb; }
.azicons svg { width: 20px; height: 20px; }
.bell { position: relative; }
.bell i { position: absolute; left: 9px; top: -9px; width: 20px; height: 20px; border-radius: 50%; background: #fff; color: #0078d4; font-size: 12px; line-height: 18px; text-align: center; }
.acct { display: flex; flex-direction: column; width: 239px; margin-top: 2px; text-align: right; line-height: 20px; font-size: 16.7px; }
.acct b { font-size: 12.4px; line-height: 17px; letter-spacing: -.15px; font-weight: 600; }
.avatar { width: 35px; height: 35px; margin-left: 9px; }

.crumbs { flex: none; display: flex; align-items: center; height: 35px; padding: 10px 0 0 25px; font-size: 16.3px; color: #0f75cd; }
.crumbs svg { width: 8px; height: 14px; margin: 0 11px 0 9px; }
.crumbs a:first-child { width: 47px; }
.crumbs a:nth-of-type(2) { width: 124px; margin-left: -1px; }
.crumbs a:last-child { letter-spacing: .2px; }

/* blades */
.blades { flex: none; display: flex; height: 735px; }
.list { display: flex; flex-direction: column; width: 394px; padding-top: 9px; overflow: hidden; }
.head { display: flex; align-items: center; height: 40px; padding: 0 40px 0 25px; justify-content: space-between; }
h1 { height: 40px; font-size: 28.5px; font-weight: 600; line-height: 38px; letter-spacing: -.1px; }
.list h1 { letter-spacing: -.27px; }
.coll { width: 10px; height: 10px; }
.list .coll { margin-top: 1px; }
.sub { height: 20px; color: #666; font-size: 14px; }
.list .sub { padding-left: 25px; }
.cmds { display: flex; align-items: center; flex: none; }
.list .cmds { width: 344px; height: 45px; margin: 12px 0 0 25px; padding: 1px 0 0 10px; border-bottom: 1px solid #d2d0ce; }
.ic { width: 20px; height: 20px; margin-right: 10px; }
.blue { color: #0078d4; }
.gray { color: #a19f9d; }
.c1 { width: 66px; }
.c2 { width: 104px; margin-left: 1px; letter-spacing: .1px; }
.cv { width: 15px; height: 10px; margin-right: 21px; }
.thin { width: 18px; height: 4px; fill: #484644; margin-top: -3px; }
.anyf { flex: none; width: 356px; height: 30px; margin: 19px 0 0 19px; padding: 4px 10px; border: 1px solid #76746f; border-radius: 2px; color: #666; }
.colname { display: flex; align-items: center; flex: none; height: 44px; padding: 0 0 0 29px; font-weight: 600; font-size: 15px; }
.sort { width: 22px; height: 16px; margin-left: 10px; }
.half { --dn: #c2c0be; margin-top: -2px; }
.vrow { display: flex; align-items: center; flex: none; height: 40px; margin-left: 19px; padding-left: 10px; border-bottom: 1px solid #edebe9; color: #0f6fca; letter-spacing: .15px; }
.vrow.sel { background: #edebe9; color: #10457a; }
.vi { width: 22px; height: 14px; margin: 1px 10px 0 0; }
.vrow a { width: 305px; padding-top: 3px; }
.el { width: 22px; height: 5px; fill: #605e5c; margin-top: -1px; }
.pager { display: flex; align-items: center; margin: auto 0 25px 19px; height: 30px; }
.pb { width: 38px; height: 30px; border: 1px solid #a19f9d; border-radius: 2px; background: #f3f2f1; color: #8a8886; text-align: center; line-height: 27px; font-size: 14px; }
.pg { width: 56px; padding: 1px 0 0 13px; }
.psel { display: flex; align-items: center; justify-content: space-between; width: 75px; height: 30px; padding: 0 9px 0 11px; border: 1px solid #605e5c; border-radius: 2px; }
.psel svg { width: 17px; height: 10px; }
.of { width: 47px; padding: 1px 0 0 7px; }

.detail { position: relative; display: flex; flex-direction: column; width: 1526px; background: #fff; box-shadow: 0 3px 14px rgba(0, 0, 0, .22); clip-path: inset(0 0 0 -20px); }
.dhead { display: flex; height: 80px; padding: 9px 0 0 26px; }
.big { width: 33px; height: 28px; margin: 18px 14px 0 0; }
.dhead > div { width: 372px; }
.dhead h1 span { font-weight: 400; font-size: 28px; letter-spacing: -.65px; }
.fstar { width: 20px; height: 20px; margin-top: 12px; color: #323130; }
.fdots { width: 15px; height: 3px; margin: 20px 0 0 23px; fill: #484644; }
.close { width: 16px; height: 16px; margin: 14px 36px 0 auto; color: #323130; }
.dbody { display: flex; flex: 1; }
.menu { display: flex; flex-direction: column; width: 331px; }
.msearch { display: flex; align-items: center; height: 48px; padding: 0 0 0 25px; gap: 19px; }
.mbox { display: flex; align-items: center; gap: 8px; width: 262px; height: 30px; padding-left: 6px; border: 1px solid #605e5c; border-radius: 2px; color: #666; }
.mbox svg, .fbox svg { color: #0078d4; }
.mscroll { display: flex; height: 607px; overflow: hidden; }
.items { width: 310px; margin-top: -14px; letter-spacing: .1px; }
.items a { display: flex; align-items: center; gap: 12px; height: 40px; padding: 1px 0 0 25px; color: #323130; }
.items a svg { width: 19px; height: 19px; }
.items .on { background: #edebe9; }
.items h2 { width: 260px; height: 42px; margin: 9px 0 0 25px; padding-top: 12px; border-bottom: 1px solid #c8c6c4; font-size: 15.2px; line-height: 20px; font-weight: 600; }
.bar { display: flex; flex-direction: column; width: 21px; height: 607px; align-items: center; padding: 9px 0; background: #f1f1f1; }
.bar svg { width: 10px; height: 5px; }
.thumb { width: 17px; height: 250px; margin: 148px 0 auto; background: #c1c1c1; }

.content { width: 1170px; padding-left: 25px; }
.content .cmds { width: 1145px; height: 46px; padding: 2px 0 0 10px; border-bottom: 1px solid #d2d0ce; }
.a1 { width: 50px; letter-spacing: .2px; }
.a2 { width: 73px; }
.vsep { width: 1px; height: 21px; margin-right: 20px; background: #d2d0ce; }
.filters { display: flex; gap: 7px; margin: 31px 0 0 6px; }
.fbox { display: flex; align-items: center; width: 375px; height: 30px; padding-left: 6px; border: 2px solid #0078d4; border-radius: 2px; color: #666; }
.fbox i { width: 1px; height: 22px; margin-left: 7px; background: #000; }
.pill { width: 195px; height: 30px; padding: 5px 0 0 19px; border-radius: 15px; background: #e3f0fb; color: #1b1a19; white-space: nowrap; letter-spacing: .14px; }
.pill b { font-weight: 700; }
.trow { display: grid; grid-template-columns: 32px 270px 270px 270px 268px 22px; width: 1145px; padding-left: 8px; align-items: center; border-bottom: 1px solid #edebe9; }
.th { height: 51px; padding-top: 7px; font-weight: 600; font-size: 15px; }
.th span { display: flex; align-items: center; padding-top: 1px; }
.th span:not(:nth-child(2)) .sort { margin-left: 9px; }
.td { height: 40px; }
.td a { color: #0f6fca; padding-left: 1px; letter-spacing: .27px; }
.td span { padding-left: 1px; }
.td a, .td span { padding-top: 4px; }
.td .dis { padding-left: 0; margin-top: -2px; }
.cb { width: 23px; height: 23px; border: 1px solid #323130; border-radius: 2px; margin-left: -.5px; }

/* downloads shelf */
.downloads { flex: none; display: flex; align-items: center; height: 71px; background: #35363a; border-top: 1px solid #606165; color: #fff; letter-spacing: .1px; }
.dl { display: flex; align-items: center; width: 291.3px; height: 55px; padding-left: 21px; border-right: 1px solid #6b6c70; }
.dl:first-child { width: 296px; padding-left: 25px; }
.di { width: 20px; height: 22px; margin-top: -2px; }
.dl span { width: 200px; margin-left: 15px; }
.du { width: 12px; height: 8px; }
.showall { width: 98px; height: 39px; margin: -2px 16px 0 auto; border: 1px solid #414246; border-radius: 4px; color: #8ab4f8; text-align: center; line-height: 37px; font-weight: 600; font-size: 14.5px; letter-spacing: -.2px; }
.dx { width: 13px; height: 13px; margin: -2px 16px 0 0; }

/* taskbar */
.taskbar { flex: none; display: flex; align-items: center; height: 60px; background: linear-gradient(90deg, #edf0ea 0, #e7f0fa 8%, #e8eef9 45%, #dff0f7 55%, #ebe9f7 70%, #e9f0fa 80%, #e5f3f8 100%); border-top: 1px solid #c7c9ce; color: #1b1b1b; font-size: 14.4px; letter-spacing: -.05px; }
.weather { display: flex; align-items: center; gap: 8px; width: 450px; margin-left: 25px; }
.weather p, .tray p { margin-top: -2px; }
.weather span { color: #5f6368; }
.win { width: 29px; height: 29px; margin-right: 17px; }
.tsearch { display: flex; align-items: center; gap: 11px; width: 275px; height: 40px; padding-left: 14px; border-radius: 20px; background: #f9fbfe; border: 1px solid #d6dae4; font-size: 16px; color: #5b5f66; letter-spacing: 0; }
.apps { display: flex; margin-left: 2px; }
.apps span { position: relative; display: flex; align-items: center; justify-content: center; width: 55px; height: 59px; }
.apps svg { width: 30px; height: 30px; }
.run::after, .cur::after { content: ""; position: absolute; bottom: 6px; width: 8px; height: 4px; border-radius: 2px; background: #85898f; }
.cur::before { content: ""; position: absolute; left: 4px; top: 6px; width: 47px; height: 48px; border-radius: 4px; background: rgba(255, 255, 255, .65); border: 1px solid #dfe6ee; }
.cur::after { width: 20px; background: #0078d4; }
.cur svg { position: relative; }
.cur i { position: absolute; left: 29px; top: 8px; width: 20px; height: 20px; border-radius: 50%; background: #ee7100; color: #fff; font-size: 12px; line-height: 20px; text-align: center; }
.tray { display: flex; align-items: center; margin: 0 19px 0 auto; }
.wifi { margin-left: 23px; }
.spk { margin-left: 10px; }
.bat { margin-left: 10px; }
.tray p { width: 90px; text-align: right; white-space: nowrap; letter-spacing: .05px; }
```
